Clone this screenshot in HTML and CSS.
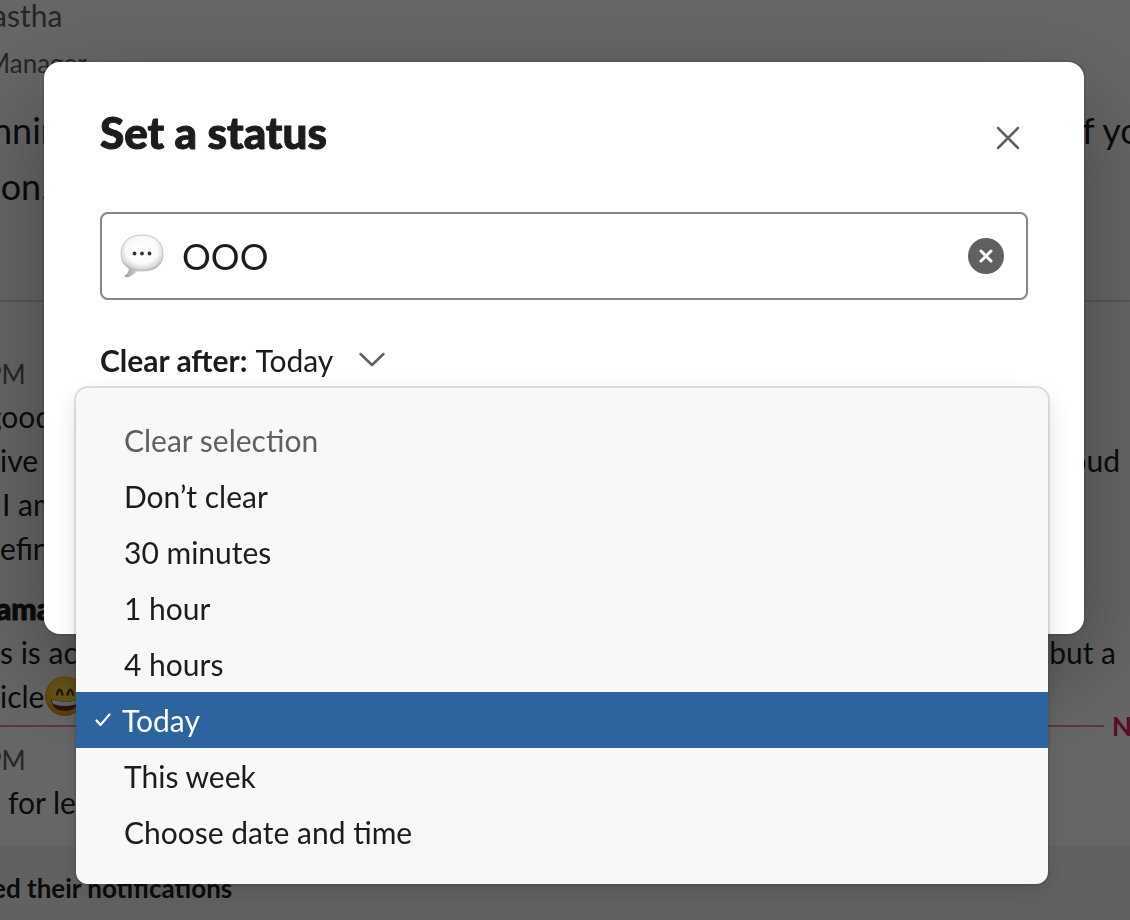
FILE: index.html
```html
<!DOCTYPE html>
<html lang="en">
<head>
<meta charset="utf-8">
<meta name="viewport" content="width=device-width, initial-scale=1">
<title>Set a status</title>
<link rel="stylesheet" href="styles.css">
</head>
<body>
<main class="chat" aria-hidden="true">
  <section class="intro">
    <div class="intro-name bleed">astha</div>
    <div class="intro-role bleed-wide">Manager</div>
    <div class="intro-line bleed"><span>nnin</span><span class="intro-tail">f you</span></div>
    <div class="intro-line bleed"><span>ion.</span></div>
  </section>
  <section class="messages">
    <div class="time bleed-wide">PM</div>
    <div class="line bleed-wide">good</div>
    <div class="line"><span>ive</span><span>oud</span></div>
    <div class="line indent">I am</div>
    <div class="line">efin</div>
    <div class="author">ama</div>
    <div class="line"><span>s is ac</span><span class="tail-edge">but a</span></div>
    <div class="line"><span>icle</span><svg class="emoji" viewBox="0 0 40 40">
      <defs><radialGradient id="face" cx=".5" cy=".4" r=".6"><stop offset="0" stop-color="#ffe24a"/><stop offset=".7" stop-color="#fdc433"/><stop offset="1" stop-color="#e2891b"/></radialGradient></defs>
      <circle cx="20" cy="20" r="20" fill="url(#face)"/>
      <path d="M12 18.500Q14.500 9 17.500 18.500M22.500 18.500Q25.500 9 28 18.500" fill="none" stroke="#63361a" stroke-width="2.500" stroke-linecap="round"/>
      <path d="M6 23Q20 28 34 23Q33 35 20 35Q7 35 6 23Z" fill="#6b3618"/>
      <path d="M6.500 23.500Q20 28 33.500 23.500L32 28Q20 32 8 28Z" fill="#fff"/>
    </svg></div>
    <div class="new-rule"><span class="rule"></span><span class="new-label">New</span></div>
    <div class="time late bleed-wide">PM</div>
    <div class="line indent-more">for le</div>
  </section>
  <footer class="notice"><div class="bleed">ed their notifications</div></footer>
</main>

<div class="backdrop">
  <div class="dialog" role="dialog" aria-modal="true" aria-labelledby="title">
    <header class="dialog-head">
      <h1 id="title">Set a status</h1>
      <button class="close" type="button" aria-label="Close">
        <svg width="24" height="24" viewBox="0 0 24 24"><path d="M2 2L22 22M22 2L2 22" fill="none" stroke="#616061" stroke-width="2.500" stroke-linecap="round"/></svg>
      </button>
    </header>
    <div class="field">
      <svg class="speech" width="44" height="44" viewBox="0 0 44 44" aria-hidden="true">
        <defs>
          <radialGradient id="bubble" cx=".5" cy=".42" r=".6"><stop offset="0" stop-color="#fff"/><stop offset=".62" stop-color="#fafafa"/><stop offset=".85" stop-color="#dcdcdc"/><stop offset="1" stop-color="#aaa"/></radialGradient>
          <linearGradient id="tail" x1="0" x2="1"><stop offset="0" stop-color="#9c9c9c"/><stop offset="1" stop-color="#d2d2d2"/></linearGradient>
        </defs>
        <path d="M22 1C36 1 43 9 43 19.500C43 31 36 37 22 37C8 37 1 31 1 19.500C1 9 8 1 22 1Z" fill="url(#bubble)" stroke="#bcbcbc" stroke-width=".8"/>
        <path d="M9 33Q9 39 4.500 42Q5 44 9 43Q14 41 18 36.500Q13 36 9 33Z" fill="url(#tail)"/>
        <circle cx="14.500" cy="19.500" r="1.900" fill="#333"/><circle cx="22" cy="19.500" r="1.900" fill="#333"/><circle cx="29.500" cy="19.500" r="1.900" fill="#333"/>
      </svg>
      <input class="status" type="text" value="OOO" aria-label="Status">
      <button class="reset" type="button" aria-label="Clear status">
        <svg width="14" height="14" viewBox="0 0 14 14"><path d="M2 2L12 12M12 2L2 12" fill="none" stroke="#fff" stroke-width="3" stroke-linecap="round"/></svg>
      </button>
    </div>
    <div class="clear-after">
      <button class="picker" type="button" aria-haspopup="listbox" aria-expanded="true"><strong>Clear after:</strong> <span>Today</span>
        <svg width="28" height="16" viewBox="0 0 28 16"><path d="M2.500 2L14 13L25.500 2" fill="none" stroke="#616061" stroke-width="2.500" stroke-linecap="round" stroke-linejoin="round"/></svg>
      </button>
      <div class="menu" role="listbox" aria-label="Clear after">
        <button class="option muted" type="button" role="option">Clear selection</button>
        <button class="option" type="button" role="option">Don’t clear</button>
        <button class="option" type="button" role="option">30 minutes</button>
        <button class="option" type="button" role="option">1 hour</button>
        <button class="option" type="button" role="option">4 hours</button>
        <button class="option selected" type="button" role="option" aria-selected="true"><svg width="16" height="14" viewBox="0 0 16 14"><path d="M1.500 7.500L5.500 12L14.500 1.500" fill="none" stroke="#fff" stroke-width="2.200" stroke-linecap="round" stroke-linejoin="round"/></svg>Today</button>
        <button class="option" type="button" role="option">This week</button>
        <button class="option" type="button" role="option">Choose date and time</button>
      </div>
    </div>
  </div>
</div>
</body>
</html>
```
FILE: styles.css
```css
* { box-sizing: border-box; }

body {
  margin: 0;
  height: 100vh;
  overflow: hidden;
  background: #fff;
  color: #1d1c1d;
  font: 30px/44px Lato, sans-serif;
}

button {
  margin: 0;
  padding: 0;
  border: 0;
  background: none;
  color: inherit;
  font: inherit;
  text-align: left;
}

svg { flex: none; display: block; }

/* Conversation behind the dialog */
.chat {
  display: flex;
  flex-direction: column;
  height: 100%;
  overflow: hidden;
  white-space: nowrap;
}

.bleed { margin-left: -8px; }
.bleed-wide { margin-left: -14px; }

.intro {
  padding-bottom: 86px;
  border-bottom: 2px solid #ddd;
}

.intro-name {
  height: 40px;
  font-size: 30px;
  line-height: 30px;
  color: #616061;
}

.intro-role {
  height: 62px;
  font-size: 26px;
  line-height: 46px;
  color: #616061;
}

.intro-line {
  display: flex;
  justify-content: space-between;
  font-size: 36px;
  line-height: 56px;
}

.intro-tail { width: 48px; }

.messages { flex: 1; padding-top: 52px; }

.time {
  font-size: 26px;
  line-height: 40px;
  color: #616061;
}

.late { padding-top: 6px; }

.line {
  display: flex;
  align-items: center;
  justify-content: space-between;
  padding-right: 10px;
}

.line .tail-edge { margin-right: 4px; }

.line .emoji { margin-right: auto; margin-left: 1px; }

.indent { padding-left: 2px; }
.indent-more { padding-left: 8px; }

.emoji { width: 40px; height: 40px; }

.author {
  margin-left: -4px;
  padding-top: 16px;
  font-weight: 900;
  -webkit-text-stroke: 1px currentColor;
}

.new-rule {
  display: flex;
  align-items: center;
  gap: 8px;
  height: 16px;
  color: #e01e5a;
}

.rule {
  flex: 1;
  height: 2px;
  background: #e8899f;
}

.new-label {
  width: 18px;
  font-size: 26px;
  font-weight: 700;
}

.notice {
  height: 74px;
  padding-top: 20px;
  background: #f2f2f2;
  font-size: 26px;
  font-weight: 700;
}

/* Status dialog */
.backdrop {
  position: fixed;
  inset: 0;
  padding: 62px 46px 0 44px;
  background: rgba(0, 0, 0, .6);
}

.dialog {
  padding: 42px 56px 252px;
  border-radius: 16px;
  background: #fff;
  box-shadow: 0 0 0 2px rgba(29, 28, 29, .13), 0 36px 96px rgba(0, 0, 0, .35);
}

.dialog-head {
  display: flex;
  align-items: flex-start;
  justify-content: space-between;
  margin-bottom: 52px;
}

h1 {
  margin: 0;
  font-size: 44px;
  line-height: 56px;
  font-weight: 900;
  -webkit-text-stroke: 1px currentColor;
}

.close { padding: 22px 8px 8px; margin-bottom: 2px; }

.field {
  display: flex;
  align-items: center;
  height: 88px;
  padding: 0 22px 0 18px;
  border: 2px solid #868686;
  border-radius: 8px;
}

.status {
  flex: 1;
  min-width: 0;
  padding: 0 18px;
  border: 0;
  outline: 0;
  background: none;
  color: #1d1c1d;
  font: 36px/44px Lato, sans-serif;
}

.reset {
  display: grid;
  place-items: center;
  width: 36px;
  height: 36px;
  border-radius: 50%;
  background: #616061;
}

.clear-after {
  position: relative;
  margin-top: 40px;
}

.picker {
  display: flex;
  align-items: center;
  gap: 8px;
  height: 40px;
}

.picker strong { font-weight: 700; }

.picker svg { margin-left: 17px; }

.menu {
  position: absolute;
  top: 48px;
  left: -24px;
  right: -20px;
  padding: 24px 0;
  border-radius: 12px;
  background: #f8f8f8;
  box-shadow: 0 0 0 2px rgba(29, 28, 29, .13), 0 8px 24px rgba(0, 0, 0, .12);
}

.option {
  display: flex;
  align-items: center;
  width: 100%;
  height: 56px;
  padding: 0 48px;
}

.dialog { padding-bottom: 254px; }

.muted { color: #616061; }

.selected {
  gap: 11px;
  padding-left: 19px;
  background: #2d639e;
  color: #fff;
}
```
